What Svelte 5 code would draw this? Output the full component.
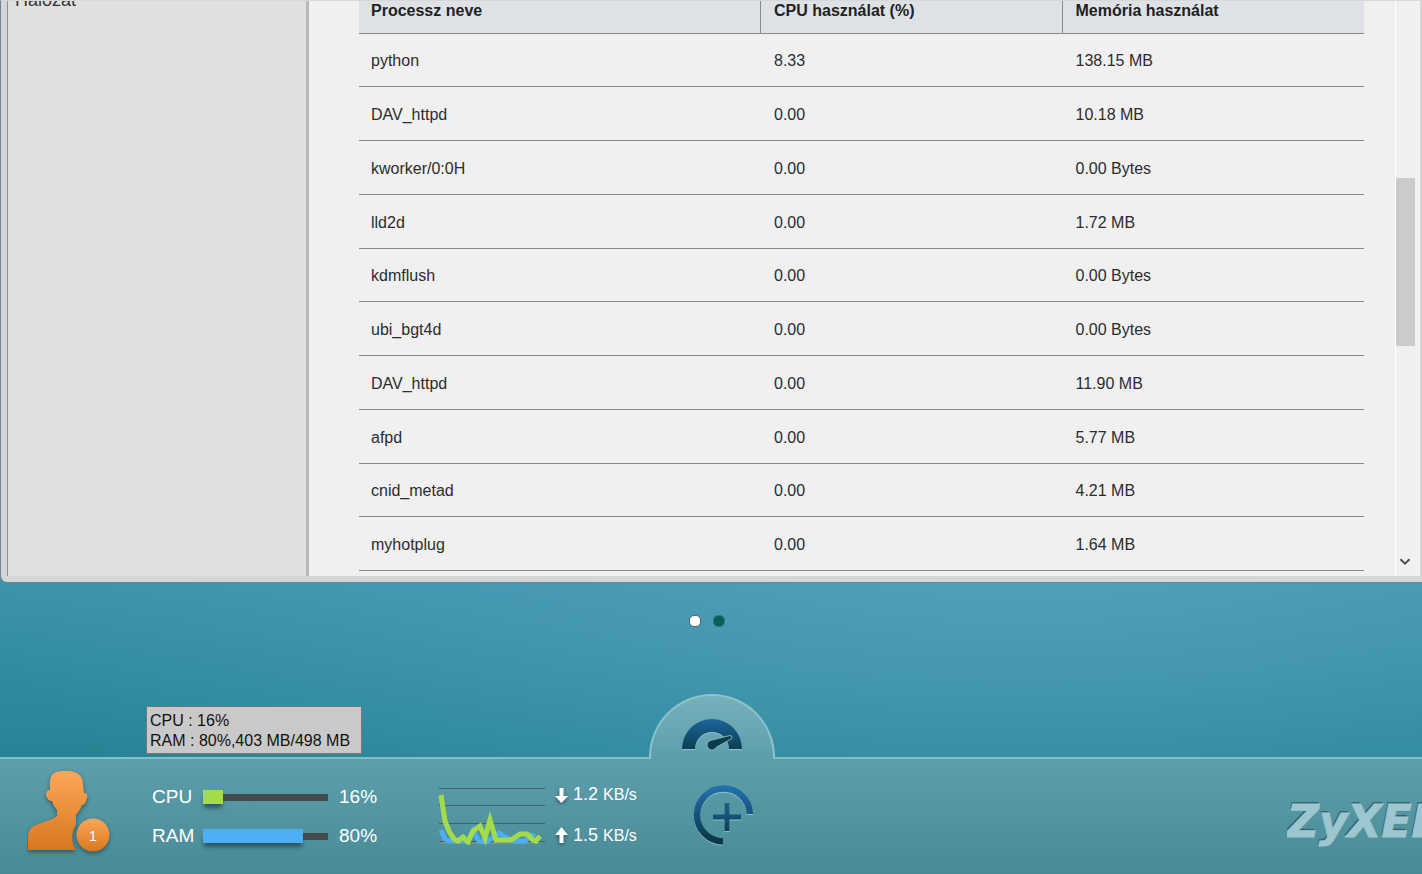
<script lang="ts">
    const processes = [
        {name: "python", cpu: "8.33", memory: "138.15 MB"},
        {name: "DAV_httpd", cpu: "0.00", memory: "10.18 MB"},
        {name: "kworker/0:0H", cpu: "0.00", memory: "0.00 Bytes"},
        {name: "lld2d", cpu: "0.00", memory: "1.72 MB"},
        {name: "kdmflush", cpu: "0.00", memory: "0.00 Bytes"},
        {name: "ubi_bgt4d", cpu: "0.00", memory: "0.00 Bytes"},
        {name: "DAV_httpd", cpu: "0.00", memory: "11.90 MB"},
        {name: "afpd", cpu: "0.00", memory: "5.77 MB"},
        {name: "cnid_metad", cpu: "0.00", memory: "4.21 MB"},
        {name: "myhotplug", cpu: "0.00", memory: "1.64 MB"},
    ];

    const meters = [
        {label: "CPU", value: 16, color: "#a3db4b"},
        {label: "RAM", value: 80, color: "#4eaef2"},
    ];

    let page = $state(0);
</script>

<div class="desktop">
    <section class="window">
        <nav class="sidebar">
            <a href="#network">Hálózat</a>
        </nav>
        <div class="content">
            <table>
                <thead>
                    <tr>
                        <th class="name">Processz neve</th>
                        <th>CPU használat (%)</th>
                        <th>Memória használat</th>
                    </tr>
                </thead>
                <tbody>
                    {#each processes as process}
                        <tr>
                            <td>{process.name}</td>
                            <td>{process.cpu}</td>
                            <td>{process.memory}</td>
                        </tr>
                    {/each}
                </tbody>
            </table>
        </div>
        <div class="scrollbar">
            <div class="thumb"></div>
            <button class="scroll-down" aria-label="Le">
                <svg width="12" height="8" viewBox="0 0 12 8">
                    <path d="M1.5 1.2 6 5.7l4.5-4.5" fill="none" stroke="#505050" stroke-width="2" />
                </svg>
            </button>
        </div>
    </section>

    <div class="pager">
        {#each [0, 1] as index}
            <button class="dot" class:active={page === index} aria-label="Oldal {index + 1}" onclick={() => page = index}></button>
        {/each}
    </div>

    <footer class="dock">
        <div class="status">
            <button class="user" aria-label="Felhasználó">
                <svg width="90" height="90" viewBox="0 0 90 90">
                    <defs>
                        <linearGradient id="skin" x1="0" y1="0" x2="0" y2="1">
                            <stop offset="0" stop-color="#fba758" />
                            <stop offset="1" stop-color="#d9771f" />
                        </linearGradient>
                    </defs>
                    <path class="raised" fill="url(#skin)" d="M25 7C28 3 34 3 41 3c9 0 15 5 15 13l1 9c3 0 4 2 3 5-1 4-2 7-5 7-1 4-4 7-6 10v10c-5 7-5 17 0 25H1V69c0-7 3-10 8-12 9-4 17-5 21-9V42c-2-2-4-5-5-9-3 0-5-2-6-6 0-3 1-5 4-5 0-5-1-11 2-15z" />
                    <circle class="raised" cx="66" cy="67" r="16.5" fill="url(#skin)" />
                </svg>
                <span class="badge">1</span>
            </button>

            <div class="meters">
                <div class="tooltip">CPU : 16%<br />RAM : 80%,403 MB/498 MB</div>
                {#each meters as meter}
                    <div class="meter">
                        <span class="meter-label">{meter.label}</span>
                        <div class="track">
                            <div class="fill" style="width: {meter.value}%; background: {meter.color}"></div>
                        </div>
                        <span>{meter.value}%</span>
                    </div>
                {/each}
            </div>

            <svg class="graph" width="108" height="60" viewBox="0 0 108 60">
                <path d="M1 3.5h106M1 20.5h106M1 38.5h106M1 56.5h106" stroke="#3d656e" />
                <path d="M1 58h99" stroke="#a08c78" />
                <path d="M3 45l4 9 5 2h18l5-10 6 10 7 1 8-5 5-4 6 4 8 4h12l6-6 4 2" fill="none" stroke="#4eaef2" stroke-width="5" />
                <path d="M3 10l4 26 4 10 5 8 4 2 5-4 5 5 5-11 7-5 5 12 5-18 6 20h15l9-6h7l6 6 3 1 4-5" fill="none" stroke="#a3db4b" stroke-width="5" />
            </svg>

            <div class="rates">
                <div class="rate">
                    <svg width="15" height="20" viewBox="0 0 15 20">
                        <path class="raised" fill="#fff" d="M5.500 3h4v8H14l-6.500 7L1 11h4.500z" />
                    </svg>
                    <span>1.2 <small>KB/s</small></span>
                </div>
                <div class="rate">
                    <svg width="15" height="20" viewBox="0 0 15 20">
                        <path class="raised" fill="#fff" d="M5.500 17h4V9H14L7.500 1 1 9h4.500z" />
                    </svg>
                    <span>1.5 <small>KB/s</small></span>
                </div>
            </div>
        </div>

        <div class="center">
            <button class="dome" aria-label="Műszerfal">
                <svg width="64" height="36" viewBox="0 0 64 36">
                    <defs>
                        <linearGradient id="gauge" x1="0" y1="0" x2="0" y2="1">
                            <stop offset="0" stop-color="#1d659b" />
                            <stop offset="1" stop-color="#0c3f52" />
                        </linearGradient>
                    </defs>
                    <path class="inset" fill="url(#gauge)" d="M2 32a30 30 0 0 1 60 0H49a17 17 0 0 0-34 0z" />
                    <path d="M30 24 50 19q3 1 0 3L36 30a4.500 4.500 0 1 1-6-6z" fill="#0c3b4a" stroke="#7db2be" stroke-width="2" paint-order="stroke" />
                </svg>
            </button>
            <button class="add" aria-label="Hozzáadás">
                <svg width="64" height="64" viewBox="0 0 64 64">
                    <defs>
                        <linearGradient id="ring" gradientUnits="userSpaceOnUse" x1="0" y1="2" x2="0" y2="62">
                            <stop offset="0" stop-color="#2273b0" />
                            <stop offset="1" stop-color="#0a3340" />
                        </linearGradient>
                    </defs>
                    <g class="inset" fill="none" stroke="url(#ring)">
                        <path d="M59 31A26.500 26.500 0 1 0 32 58.500" stroke-width="6.500" />
                        <path d="M36 20v28M22 34.010h28" stroke-width="5" />
                    </g>
                </svg>
            </button>
        </div>

        <div class="brand">ZyXEL</div>
    </footer>
</div>

<style>
    :global(body) {
        margin: 0;
    }

    .desktop {
        display: flex;
        flex-direction: column;
        min-height: 100vh;
        overflow: hidden;
        font-family: "Liberation Sans", Arial, sans-serif;
        font-size: 16px;
        background:
            radial-gradient(ellipse 75% 50% at 72% 62%, rgba(96, 170, 198, 0.6), transparent),
            linear-gradient(to bottom, #3d93ab 66%, #268394 87%);
    }

    button {
        padding: 0;
        border: none;
        background: none;
        font: inherit;
        cursor: pointer;
    }

    svg {
        display: block;
    }

    .raised {
        filter: drop-shadow(0 2px 2px rgba(20, 50, 60, 0.6));
    }

    .inset {
        filter: drop-shadow(0 1px 0 rgba(150, 205, 215, 0.8));
    }

    /* application window */
    .window {
        display: flex;
        border: 1px solid #6b8595;
        border-top-color: #d8d8d8;
        border-right: none;
        border-radius: 0 0 0 7px;
        background: #d4d6d7;
        padding: 0 2px 6px 6px;
    }

    .sidebar {
        flex: 0 0 298px;
        overflow: hidden;
        border-left: 1px solid #96908e;
        border-right: 3px solid #b8b8b8;
        background: #e0e0e0;
    }

    .sidebar a {
        display: block;
        margin: -11px 0 0 7px;
        font-size: 18px;
        line-height: 20px;
        color: #333;
        text-decoration: none;
    }

    .content {
        flex: 1;
        padding: 0 31px 5px 50px;
        background: #f0f0f0;
    }

    table {
        width: 100%;
        table-layout: fixed;
        border-collapse: separate;
        border-spacing: 0;
        color: #2c2c2c;
    }

    th,
    td {
        box-sizing: border-box;
        height: 54px;
        padding: 2px 12px 0;
        border-bottom: 1px solid #8a8a8a;
        text-align: left;
    }

    tr:nth-child(4n + 1) td {
        height: 53px;
    }

    th {
        height: 33px;
        padding: 0 12px 13px;
        line-height: 18px;
        background: #dee2e7;
        color: #222;
    }

    th:not(:last-child) {
        border-right: 1px solid #8a8a8a;
    }

    th + th,
    td + td {
        padding-left: 13px;
    }

    .name {
        width: 40%;
    }

    .scrollbar {
        display: flex;
        flex-direction: column;
        flex: 0 0 24px;
        border-left: 1px solid #fff;
        background: #f0f0f0;
    }

    .thumb {
        width: 19px;
        height: 168px;
        margin-top: 177px;
        background: #cbcbcb;
    }

    .scroll-down {
        width: 19px;
        margin-top: auto;
        padding: 0 3px 10px;
    }

    .pager {
        display: flex;
        flex: 1;
        justify-content: center;
        align-items: flex-start;
        gap: 12px;
        padding: 32px 8px 0 0;
    }

    .dot {
        box-sizing: border-box;
        width: 12px;
        height: 12px;
        border: 1px solid #2c7c88;
        border-radius: 5px;
        background: #066059;
    }

    .dot.active {
        border-color: #52656c;
        background: #fff;
    }

    /* bottom dock */
    .dock {
        display: grid;
        grid-template-columns: minmax(0, 1fr) 126px minmax(0, 1fr);
        border-top: 2px solid #83bdc9;
        background: linear-gradient(to bottom, #5d9eab, #488b95);
        color: #fff;
    }

    .status {
        display: flex;
        align-items: flex-start;
        padding: 9px 0 16px 27px;
    }

    .user {
        display: grid;
        width: 90px;
        height: 90px;
        color: #fff;
    }

    .user > * {
        grid-area: 1 / 1;
    }

    .badge {
        z-index: 1;
        align-self: end;
        justify-self: end;
        width: 48px;
        line-height: 44px;
        font-size: 14px;
    }

    .meters {
        position: relative;
        display: flex;
        flex-direction: column;
        gap: 17px;
        margin: 18px 0 0 35px;
    }

    .meter {
        display: flex;
        align-items: center;
        font-size: 19px;
        line-height: 22px;
    }

    .meter-label {
        width: 51px;
    }

    .track {
        display: flex;
        align-items: center;
        width: 125px;
        height: 7px;
        margin-right: 11px;
        background: #464a4d;
    }

    .fill {
        height: 14px;
        box-shadow: 0 5px 4px -1px rgba(25, 60, 70, 0.7);
    }

    .tooltip {
        position: absolute;
        bottom: 93px;
        left: -6px;
        padding: 4px 11px 2px 3px;
        border: 1px solid #777;
        background: #c9c9c9;
        line-height: 20px;
        color: #111;
        white-space: nowrap;
    }

    .graph {
        margin: 17px 0 0 61px;
    }

    .rates {
        display: flex;
        flex-direction: column;
        gap: 18px;
        margin: 15px 0 0 8px;
    }

    .rate {
        display: flex;
        align-items: center;
        gap: 4px;
        font-size: 18px;
        line-height: 22px;
    }

    .rate small {
        font-size: 16px;
    }

    .center {
        display: flex;
        flex-direction: column;
        align-items: center;
        padding-left: 2px;
    }

    .dome {
        display: flex;
        justify-content: center;
        box-sizing: border-box;
        width: 126px;
        height: 65px;
        margin-top: -65px;
        padding-top: 21px;
        border: 2px solid #8bc3cf;
        border-bottom: none;
        border-radius: 63px 63px 0 0;
        background: linear-gradient(to bottom, #76b0bc, #5d9eab);
    }

    .add {
        margin: 24px 0 0 22px;
    }

    .brand {
        overflow: hidden;
        margin-left: auto;
        padding-top: 38px;
        width: 135px;
        font: italic bold 44px/50px "DejaVu Sans", Verdana, sans-serif;
        color: #9cc6d0;
        -webkit-text-stroke: 1px #9cc6d0;
        text-shadow: -1px -2px 0 #3b626b;
    }
</style>
